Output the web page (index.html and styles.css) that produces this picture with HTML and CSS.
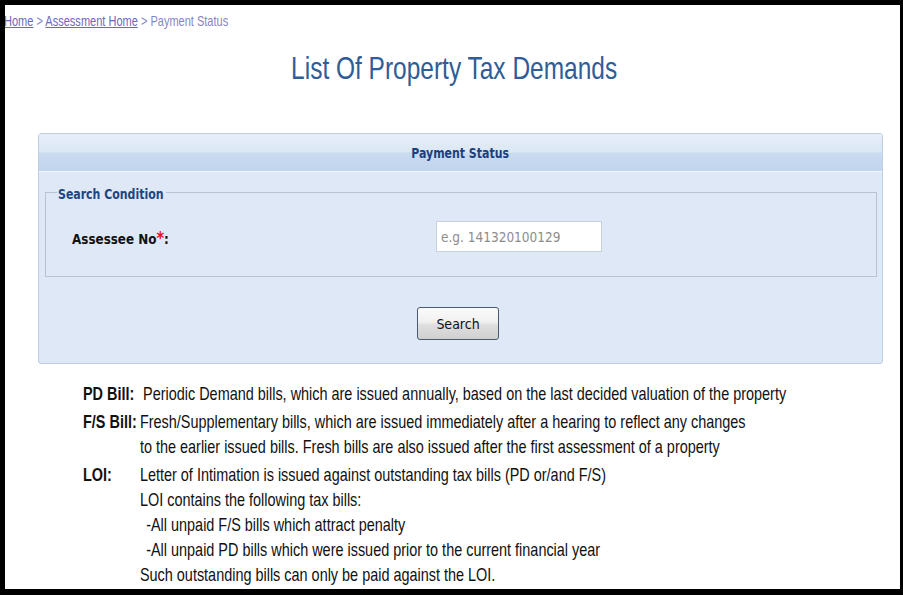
FILE: index.html
```html
<!DOCTYPE html>
<html>
<head>
<meta charset="utf-8">
<link rel="stylesheet" href="styles.css">
</head>
<body>
<div class="frame">
  <div class="crumb"><span class="crumb-in"><a href="#">Home</a> &gt; <a href="#">Assessment Home</a> &gt; <span>Payment Status</span></span></div>
  <h1 class="title"><span class="title-in">List Of Property Tax Demands</span></h1>
  <div class="panel">
    <div class="panel-head"><span class="head-in">Payment Status</span></div>
    <div class="panel-body">
      <fieldset class="cond">
        <legend><span class="legend-in">Search Condition</span></legend>
        <div class="row">
          <label class="lbl"><span class="lbl-in">Assessee No<span class="req">*</span>:</span></label>
          <input class="inp" type="text" placeholder="e.g. 141320100129">
        </div>
      </fieldset>
      <div class="actions"><button class="btn">Search</button></div>
    </div>
  </div>
  <div class="notes">
    <div class="term">PD Bill:</div>
    <div class="desc pd">Periodic Demand bills, which are issued annually, based on the last decided valuation of the property</div>
    <div class="term">F/S Bill:</div>
    <div class="desc">Fresh/Supplementary bills, which are issued immediately after a hearing to reflect any changes<br>to the earlier issued bills. Fresh bills are also issued after the first assessment of a property</div>
    <div class="term">LOI:</div>
    <div class="desc">Letter of Intimation is issued against outstanding tax bills (PD or/and F/S)<br>LOI contains the following tax bills:<br><span class="ind">-All unpaid F/S bills which attract penalty</span><br><span class="ind">-All unpaid PD bills which were issued prior to the current financial year</span><br>Such outstanding bills can only be paid against the LOI.</div>
  </div>
</div>
</body>
</html>
```

FILE: styles.css
```css
html, body {
  margin: 0;
  padding: 0;
  background: #000;
}
.frame {
  margin: 5px 3px 0 5px;
  height: 584px;
  background: #fff;
  overflow: hidden;
  font-family: "Liberation Sans", Arial, sans-serif;
}
.crumb {
  margin: 8px 0 0 -1px;
  font-size: 14.5px;
  line-height: 17px;
  color: #8884c8;
  white-space: nowrap;
}
.crumb-in {
  display: inline-block;
  transform: scaleX(0.76);
  transform-origin: left center;
}
.crumb a {
  color: #6e66c0;
  text-decoration: underline;
}
.title {
  margin: 20px 0 0;
  padding-left: 4px;
  text-align: center;
  font-weight: normal;
  font-size: 32px;
  line-height: 36px;
  color: #2e5d98;
  white-space: nowrap;
}
.title-in {
  display: inline-block;
  transform: scaleX(0.765);
  transform-origin: center center;
}
.panel {
  margin: 47px 0 0 33px;
  width: 843px;
  height: 229px;
  border: 1px solid #bfcde0;
  border-radius: 3px;
  background: #dfe8f6;
  font-family: "DejaVu Sans Condensed", "DejaVu Sans", sans-serif;
}
.panel-head {
  height: 38px;
  box-sizing: border-box;
  border-bottom: 1px solid #f4f8fd;
  background: linear-gradient(#e6eef9 0, #dce7f5 48%, #c9daf1 52%, #c2d5ee 100%);
  color: #1c3f7c;
  font-weight: bold;
  font-size: 14px;
  line-height: 39px;
  text-align: center;
}
.head-in {
  display: inline-block;
  transform: scaleX(0.87);
  transform-origin: center center;
}
.cond {
  margin: 12px 5px 0 6px;
  padding: 0 0 0 26px;
  height: 93px;
  border: 1px solid #b6c3d5;
  box-sizing: border-box;
}
.cond legend {
  margin-left: -15px;
  padding: 0 2px 0 1px;
  color: #1e4680;
  font-weight: bold;
  font-size: 14px;
  white-space: nowrap;
}
.legend-in {
  display: inline-block;
  margin-right: -15px;
  transform: translateY(2px) scaleX(0.87);
  transform-origin: left center;
}
.row {
  display: flex;
  align-items: center;
  margin-top: 21px;
}
.lbl {
  width: 364px;
  font-weight: bold;
  font-size: 14px;
  color: #111;
  white-space: nowrap;
}
.lbl-in {
  display: inline-block;
  transform: translateY(1px) scaleX(0.95);
  transform-origin: left center;
}
.req {
  color: #e0141e;
  font-size: 17px;
}
.inp {
  width: 166px;
  height: 31px;
  box-sizing: border-box;
  border: 1px solid #c9d1dc;
  background: #fff;
  padding: 0 4px;
  font-family: "DejaVu Sans Condensed", "DejaVu Sans", sans-serif;
  font-size: 13.5px;
}
.inp::placeholder {
  color: #8d8d8d;
}
.actions {
  margin-top: 30px;
  display: flex;
  justify-content: center;
}
.btn {
  width: 82px;
  height: 33px;
  margin-left: -5px;
  border: 1px solid #4a5a6e;
  border-radius: 3px;
  background: linear-gradient(#fbfbfb 0, #f0f0f0 45%, #dedede 55%, #d0d0d0 100%);
  font-family: "DejaVu Sans Condensed", "DejaVu Sans", sans-serif;
  font-size: 14px;
  color: #111;
  padding: 0;
}
.notes {
  margin: 17px 0 0 78px;
  width: max-content;
  display: grid;
  grid-template-columns: 73px auto;
  row-gap: 2.5px;
  font-size: 18.5px;
  line-height: 25.2px;
  color: #111;
  white-space: nowrap;
  transform: scaleX(0.78);
  transform-origin: left top;
}
.term {
  font-weight: bold;
}
.desc.pd {
  padding-left: 4px;
}
.ind {
  padding-left: 8px;
}
```
